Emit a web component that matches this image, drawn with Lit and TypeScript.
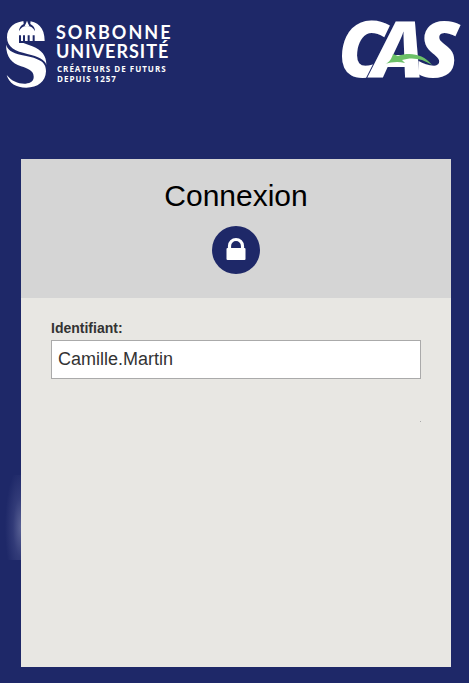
import { LitElement, html, css } from "lit";
import { customElement, property } from "lit/decorators.js";

@customElement("su-logo")
class SuLogo extends LitElement {
  static styles = css`
    :host { display: block; }
    .logo { display: block; overflow: visible; }
    .name { font: 700 18px Lato, sans-serif; letter-spacing: 1px; fill: #fff; }
    .wide { letter-spacing: 2px; }
    .tag { font: 700 8px "Open Sans", sans-serif; letter-spacing: 1px; fill: #fff; }
  `;
  render() {
    return html`
      <svg class="logo" width="180" height="85" viewBox="0 0 180 85" role="img" aria-label="Sorbonne Université">
        <g transform="scale(.33333)">
          <path fill="#fff" d="M134 93 C134 52 113 33 80 33 C44 33 21 53 21 82 C21 113 47 124 82 132 C115 140 136 149 139 165 C139 137 126 121 97 109 L62 96 L58 93 Z"/>
          <path fill="#1e2868" d="M70 30 L92 30 L91 42 C101 47 105 54 105 64 C100 53 92 48 81 48 C70 48 62 53 57 64 C57 54 62 46 71 42 Z"/>
          <path fill="#fff" d="M74 48 L78 40 L81 32 L84 40 L88 48 Z"/>
          <path fill="#1e2868" d="M57 76h6v22h-6zM69 76h6v22h-6zM83 76h6v22h-6zM98 76h6v22h-6zM57 95h47v4h-47z"/>
          <path fill="#fff" d="M18 104 C24 124 45 131 75 137 C113 145 139 153 138 184 C137 215 113 233 79 233 C47 233 28 220 20 195 C36 214 55 222 77 221 C93 220 102 213 101 199 C100 182 84 176 63 169 C36 159 19 144 18 104 Z"/>
        </g>
        <text class="name wide" x="56" y="29">SORBONNE</text>
        <text class="name" x="56" y="48">UNIVERSITÉ</text>
        <text class="tag" x="57" y="62">CRÉATEURS DE FUTURS</text>
        <text class="tag" x="57" y="72">DEPUIS 1257</text>
      </svg>
    `;
  }
}

@customElement("cas-logo")
class CasLogo extends LitElement {
  static styles = css`
    :host { display: block; }
    .logo { display: block; overflow: visible; }
    .word { font: italic 800 78px "Open Sans", sans-serif; fill: #fff; }
    .edged { stroke: #1e2868; stroke-width: 2px; paint-order: stroke; }
  `;
  render() {
    return html`
      <svg class="logo" width="134" height="75" viewBox="0 0 134 75" role="img" aria-label="CAS">
        <text class="word" y="67"><tspan x="3">C</tspan><tspan class="edged" x="37">A</tspan><tspan x="82">S</tspan></text>
        <path fill="#6cc168" d="M50 54 C54 53 57 48 58 44 L63 46 C75 42 88 44 97 55 C87 48 76 47 67 50 L70 53 C63 51 56 52 50 54 Z"/>
      </svg>
    `;
  }
}

@customElement("login-card")
class LoginCard extends LitElement {
  @property() username = "Camille.Martin";

  static styles = css`
    :host { display: flex; flex-direction: column; position: relative; font-family: "Liberation Sans", Arial, sans-serif; }
    .glow {
      position: absolute; right: 100%; top: 316px; width: 20px; height: 85px;
      background: radial-gradient(ellipse 16px 60px at 100% 52px, #5a6295, #323b78 50%, #1e286800);
    }
    .head { background: #d5d5d5; display: flex; flex-direction: column; align-items: center; padding: 19px 0 24px; }
    h1 { margin: 0; font-size: 30px; line-height: 36px; font-weight: 400; color: #000; }
    .badge { display: block; margin-top: 12px; width: 48px; height: 48px; }
    .body { flex: 1; background: #e8e7e3; padding: 20px 30px; }
    label { display: block; font-size: 14px; line-height: 20px; font-weight: 700; color: #333; }
    input {
      display: block; box-sizing: border-box; width: 100%; height: 39px; margin: 2px 0 0; padding: 0 6px;
      border: 1px solid #aaa; border-radius: 0; background: #fff; color: #333; font: 18px "Liberation Sans", Arial, sans-serif;
      outline: none;
    }
    .speck { width: 1px; height: 1px; margin: 42px 0 0 auto; background: #aaa; }
  `;
  render() {
    return html`
      <div class="glow"></div>
      <header class="head">
        <h1>Connexion</h1>
        <svg class="badge" viewBox="0 0 48 48" aria-hidden="true">
          <circle cx="24" cy="24" r="24" fill="#1e2868"/>
          <path d="M17.500 24 V20 a6.500 6.500 0 0 1 13 0 V24" fill="none" stroke="#fff" stroke-width="3.200"/>
          <rect x="14.500" y="22" width="19" height="12" rx="1" fill="#fff"/>
        </svg>
      </header>
      <form class="body">
        <label for="username">Identifiant:</label>
        <input id="username" name="username" type="text" autocomplete="username" .value=${this.username} />
        <div class="speck"></div>
      </form>
    `;
  }
}

@customElement("app-root")
class AppRoot extends LitElement {
  static styles = css`
    :host { display: flex; flex-direction: column; min-height: 100vh; box-sizing: border-box; background: #1e2868; padding-bottom: 16px; }
    .top { display: flex; justify-content: space-between; align-items: flex-start; padding-top: 10px; }
    .card { flex: 1; margin: 64px 18px 0 21px; }
  `;
  render() {
    return html`
      <div class="top"><su-logo></su-logo><cas-logo></cas-logo></div>
      <login-card class="card"></login-card>
    `;
  }
}
